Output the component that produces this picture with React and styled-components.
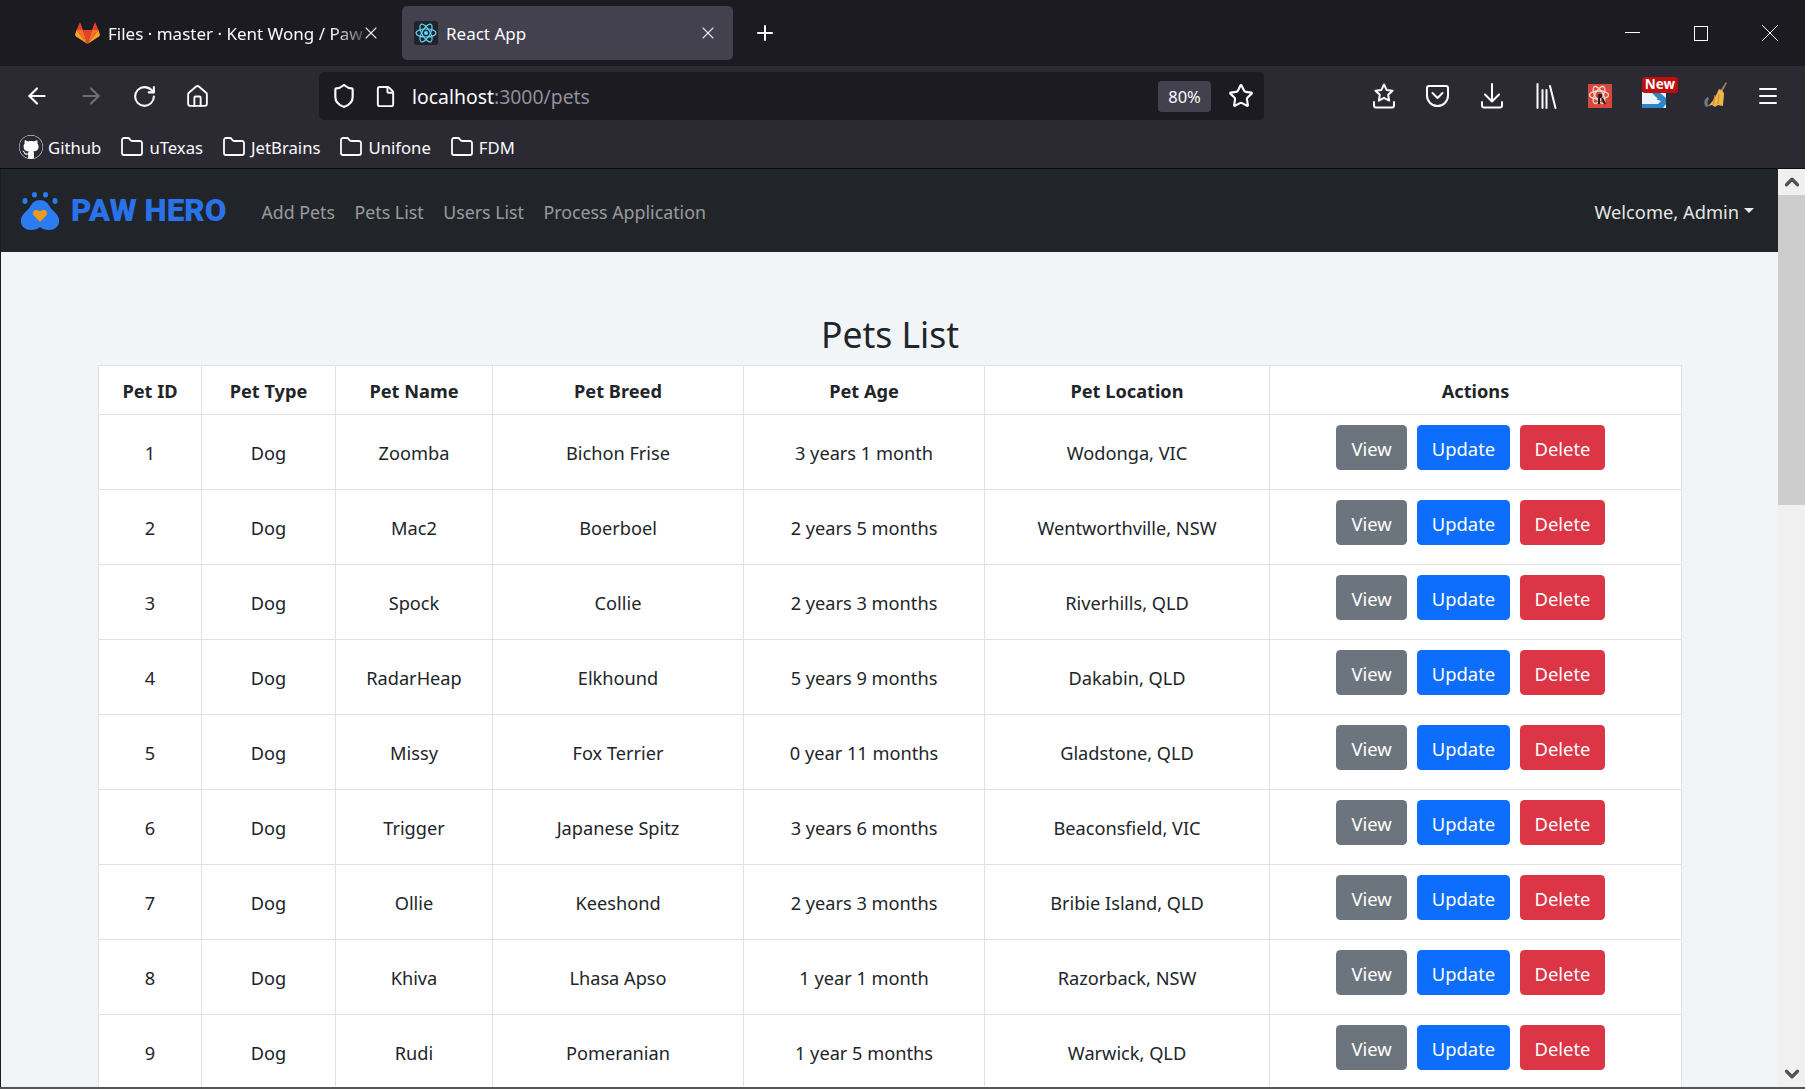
import React from 'react';
import styled, { createGlobalStyle } from 'styled-components';
import { ArrowLeft, ArrowRight, RotateCw, Home, Shield, File, Star, Menu, X, Plus, Folder, ChevronUp, ChevronDown } from 'lucide-react';
import { FaGithub } from 'react-icons/fa';

const Global = createGlobalStyle`
  html, body { margin: 0; padding: 0; height: 100%; overflow: hidden; background: #1c1b22; }
  #root { height: 100%; }
  * { box-sizing: border-box; }
`;

const Window = styled.div`
  width: 1805px; height: 1089px; display: flex; flex-direction: column; overflow: hidden;
  font-family: "Noto Sans", "Open Sans", sans-serif; border-bottom: 2px solid #555;
`;
const TabStrip = styled.div`
  height: 66px; flex: none; background: #1c1b22; display: flex; align-items: center; padding-left: 68px; color: #fbfbfe;
`;
const Tab = styled.div`
  height: 54px; display: flex; align-items: center; position: relative; border-radius: 5px;
  width: ${p => p.$w}px; padding-left: ${p => p.$pad}px; background: ${p => p.$active ? '#42414d' : 'transparent'};
`;
const TabTitle = styled.span`
  font-size: 17px; white-space: nowrap; margin-left: ${p => p.$ml}px;
  ${p => p.$fade && `-webkit-mask-image: linear-gradient(90deg, #000 88%, rgba(0,0,0,.25));`}
`;
const TabClose = styled.span`
  position: absolute; right: ${p => p.$right}px; top: 17px; display: flex; color: #e8e8ec;
`;
const NewTab = styled.span`display: flex; margin-left: 20px;`;
const WindowControls = styled.div`
  margin-left: auto; display: flex; align-items: center; gap: 54px; padding-right: 27px;
`;
const Toolbar = styled.div`
  height: 60px; flex: none; background: #2b2a33; display: flex; align-items: center; padding-left: 24px; color: #fbfbfe;
`;
const NavIcons = styled.div`display: flex; align-items: center; gap: 28px; width: 295px;`;
const UrlBar = styled.div`
  width: 945px; height: 48px; background: #1c1b22; border-radius: 5px; display: flex; align-items: center; padding: 0 10px 0 12px;
`;
const UrlText = styled.span`font-size: 19.4px; margin-left: 15px; color: #fbfbfe; flex: 1;`;
const UrlMuted = styled.span`color: #8f8f9d;`;
const ZoomPill = styled.span`
  width: 53px; height: 31px; background: #42414d; border-radius: 4px; font-size: 16.5px; display: flex; align-items: center; justify-content: center; margin-right: 17px;
`;
const Extensions = styled.div`
  display: flex; align-items: center; margin-left: 108px; height: 40px;
`;
const ExtSlot = styled.span`
  display: flex; position: relative; margin-right: ${p => p.$mr}px;
`;
const BadgedSlot = styled(ExtSlot)`
  align-self: flex-end; margin-bottom: 8px;
`;
const NewBadge = styled.span`
  position: absolute; left: 0; top: -15px; width: 36px; height: 16px; background: #c00d0d; border-radius: 3px; color: #fff;
  font-size: 13.5px; font-weight: 700; line-height: 15px; text-align: center;
`;
const Bookmarks = styled.div`
  height: 43px; flex: none; background: #2b2a33; display: flex; align-items: center; padding-left: 19px; color: #fbfbfe; border-bottom: 1px solid #0c0c0d;
`;
const Bookmark = styled.div`
  display: flex; align-items: center; gap: 5px; font-size: 16.7px; margin-right: 19px;
`;
const GithubBadge = styled.span`
  width: 24px; height: 24px; border-radius: 50%; background: #fbfbfe; display: flex; align-items: center; justify-content: center; color: #2b2a33; overflow: hidden;
`;
const Viewport = styled.div`flex: 1; display: flex; min-height: 0; border-left: 1px solid #1c1b22;`;
const Page = styled.div`flex: 1; min-width: 0; background: #f1f5f8; overflow: hidden;`;
const Navbar = styled.nav`
  height: 83px; background: #212529; display: flex; align-items: center; padding: 2px 24px 0 19px;
`;
const Brand = styled.div`display: flex; align-items: center; gap: 11px; margin-right: 35px; margin-top: -2px;`;
const BrandText = styled.span`
  font-family: Roboto, "Open Sans", sans-serif; font-weight: 900; font-size: 31.4px; color: #2a72ea; white-space: nowrap;
`;
const NavLink = styled.a`
  font-size: 17.8px; color: rgba(255,255,255,.55); margin-right: 19.5px;
`;
const UserMenu = styled.div`
  margin-left: auto; font-size: 18.3px; color: rgba(255,255,255,.9); display: flex; align-items: center;
`;
const Caret = styled.span`
  margin-left: 5px; width: 0; height: 0; border-left: 5.5px solid transparent; border-right: 5.5px solid transparent; border-top: 5.5px solid rgba(255,255,255,.9); margin-top: -2px;
`;
const Container = styled.main`padding: 51px 96px 0 97px;`;
const Title = styled.h2`
  font-weight: 400; font-size: 35.5px; line-height: 62px; margin: 0; text-align: center; color: #212529;
`;
const Table = styled.table`
  width: 1583px; border-collapse: collapse; table-layout: fixed; background: #fff; color: #212529; font-size: 18.2px; text-align: center;
`;
const Th = styled.th`
  border: 1px solid #dee2e6; height: 49px; font-weight: 700; padding: 2px 0 0; width: ${p => p.$w}px;
`;
const Td = styled.td`
  border: 1px solid #dee2e6; height: 75px; padding: 1px 0 0; vertical-align: middle;
`;
const ActionTd = styled(Td)`
  padding: 10px 0 0; vertical-align: top; white-space: nowrap;
`;
const Btn = styled.button`
  height: 45px; border: 1px solid transparent; border-radius: 4.6px; padding: 2px 0 0; color: #fff; font: inherit; font-size: 18.4px; margin-right: 10px;
  width: ${p => p.$w}px; background: ${p => p.$bg};
`;
const Scrollbar = styled.div`
  width: 27px; flex: none; background: #f0f0f0; display: flex; flex-direction: column; align-items: center; color: #505050;
`;
const ScrollBtn = styled.div`height: 26px; flex: none; display: flex; align-items: center; justify-content: center;`;
const Thumb = styled.div`width: 100%; height: 310px; background: #cdcdcd; flex: none;`;
const Spacer = styled.div`flex: 1;`;

const GitlabIcon = () => (
  <svg width="25" height="22" viewBox="0 0 25 22">
    <polygon points="12.5,22 17,8 8,8" fill="#e24329" />
    <polygon points="12.5,22 8,8 1.500,8" fill="#fc6d26" />
    <polygon points="1.500,8 0,13 1,14.500 12.500,22" fill="#fca326" />
    <polygon points="1.500,8 8,8 5,0" fill="#e24329" />
    <polygon points="12.500,22 17,8 23.500,8" fill="#fc6d26" />
    <polygon points="23.500,8 25,13 24,14.500 12.500,22" fill="#fca326" />
    <polygon points="23.500,8 17,8 20,0" fill="#e24329" />
  </svg>
);
const ReactIcon = () => (
  <svg width="24" height="24" viewBox="0 0 24 24">
    <rect width="24" height="24" rx="3" fill="#20232a" />
    <g fill="none" stroke="#61dafb" strokeWidth="1.2">
      <ellipse cx="12" cy="12" rx="10" ry="4" />
      <ellipse cx="12" cy="12" rx="10" ry="4" transform="rotate(60 12 12)" />
      <ellipse cx="12" cy="12" rx="10" ry="4" transform="rotate(120 12 12)" />
    </g>
    <circle cx="12" cy="12" r="2" fill="#61dafb" />
  </svg>
);
const MinimizeIcon = () => (
  <svg width="15" height="16" viewBox="0 0 15 16"><path d="M0 7.500h15" stroke="#fbfbfe" strokeWidth="1" /></svg>
);
const MaximizeIcon = () => (
  <svg width="14" height="15" viewBox="0 0 14 15" fill="none"><rect x=".5" y=".5" width="13" height="14" stroke="#fbfbfe" strokeWidth="1" /></svg>
);
const CloseIcon = () => (
  <svg width="16" height="16" viewBox="0 0 16 16"><path d="M0 0l16 16M16 0L0 16" stroke="#fbfbfe" strokeWidth="1" /></svg>
);
const StarTray = () => (
  <svg width="24" height="26" viewBox="0 0 24 26" fill="none" stroke="#fbfbfe" strokeWidth="2" strokeLinejoin="round" strokeLinecap="round">
    <path d="M12 1.500l2.600 5.400 5.900.8-4.300 4.100 1 5.800-5.200-2.800-5.200 2.800 1-5.800-4.300-4.100 5.900-.8z" />
    <path d="M2 19v3.500a2 2 0 0 0 2 2h16a2 2 0 0 0 2-2V19" />
  </svg>
);
const PocketIcon = () => (
  <svg width="23" height="24" viewBox="0 0 23 24" fill="none" stroke="#fbfbfe" strokeWidth="2" strokeLinejoin="round" strokeLinecap="round">
    <path d="M3 2h17a2 2 0 0 1 2 2v7.500a10.500 10.500 0 0 1-21 0V4a2 2 0 0 1 2-2z" />
    <path d="M6.500 9l5 5 5-5" />
  </svg>
);
const DownloadTray = () => (
  <svg width="24" height="26" viewBox="0 0 24 26" fill="none" stroke="#fbfbfe" strokeWidth="2" strokeLinejoin="round" strokeLinecap="round">
    <path d="M12 1v17M5 11.500l7 7 7-7" />
    <path d="M2 19v3.500a2 2 0 0 0 2 2h16a2 2 0 0 0 2-2V19" />
  </svg>
);
const LibraryIcon = () => (
  <svg width="21" height="26" viewBox="0 0 21 26" fill="none" stroke="#fbfbfe" strokeWidth="2" strokeLinecap="round">
    <path d="M1.500 1v24M6.500 7v18M10.500 7v18M14 3l5.500 22" />
  </svg>
);
const AtomExt = () => (
  <svg width="24" height="24" viewBox="0 0 24 24">
    <rect width="24" height="24" fill="#d6483c" />
    <g fill="none" stroke="#f5d5cf" strokeWidth="1.300">
      <ellipse cx="11" cy="11" rx="9.500" ry="4" />
      <ellipse cx="11" cy="11" rx="9.500" ry="4" transform="rotate(60 11 11)" />
      <ellipse cx="11" cy="11" rx="9.500" ry="4" transform="rotate(120 11 11)" />
    </g>
    <circle cx="12" cy="12" r="2.300" fill="#1f1f1f" />
    <path d="M11 14v6M14 14l3 6" stroke="#1f1f1f" strokeWidth="2" />
  </svg>
);
const SExt = () => (
  <svg width="24" height="16" viewBox="0 0 24 16">
    <rect width="24" height="16" fill="#eaf3f9" />
    <path d="M0 8h14c2 0 2-2 0-3L9 0h8l7 6v6l-3 4H0z" fill="#2f86c4" />
    <path d="M0 12h16l3-3-3-1H0z" fill="#eaf3f9" />
  </svg>
);
const BroomIcon = () => (
  <svg width="25" height="28" viewBox="0 0 25 28">
    <path d="M23 0l1 1-5 9-2-1z" fill="#a08550" />
    <path d="M16 7c3 1 5 3 5 5 0 4-1 8-1 12l-5-1-3 2-3-2-4 1c4-3 8-10 11-17z" fill="#eeb648" />
    <path d="M12 13l-2 10M16 12l-1 10" stroke="#c98f2a" strokeWidth="1" />
    <path d="M5 15c-4 2-5 6-2 10l3-1c-2-2-2-5 0-7z" fill="#6f7780" />
  </svg>
);
const PawLogo = () => (
  <svg width="40" height="38" viewBox="0 0 40 38">
    <ellipse cx="5" cy="9" rx="2.500" ry="3" fill="#2a7cf0" />
    <ellipse cx="14.500" cy="2.800" rx="2.500" ry="2.800" fill="#2a7cf0" />
    <ellipse cx="25.500" cy="2.800" rx="2.500" ry="2.800" fill="#2a7cf0" />
    <ellipse cx="35" cy="9" rx="2.500" ry="3" fill="#2a7cf0" />
    <path d="M20 8c5 0 8 3 10 7 2 3 8 7 9 12 1 6-3 11-10 11-4 0-7-1-9-3-2 2-5 3-9 3-7 0-11-5-10-11 1-5 7-9 9-12 2-4 5-7 10-7z" fill="#2a7cf0" />
    <path d="M20 30l-6.500-7c-2.500-3.500 2.500-7 6.500-3.500 4-3.500 9-0 6.500 3.500z" fill="#f49a1a" />
  </svg>
);

const rows = [
  [1, 'Dog', 'Zoomba', 'Bichon Frise', '3 years 1 month', 'Wodonga, VIC'],
  [2, 'Dog', 'Mac2', 'Boerboel', '2 years 5 months', 'Wentworthville, NSW'],
  [3, 'Dog', 'Spock', 'Collie', '2 years 3 months', 'Riverhills, QLD'],
  [4, 'Dog', 'RadarHeap', 'Elkhound', '5 years 9 months', 'Dakabin, QLD'],
  [5, 'Dog', 'Missy', 'Fox Terrier', '0 year 11 months', 'Gladstone, QLD'],
  [6, 'Dog', 'Trigger', 'Japanese Spitz', '3 years 6 months', 'Beaconsfield, VIC'],
  [7, 'Dog', 'Ollie', 'Keeshond', '2 years 3 months', 'Bribie Island, QLD'],
  [8, 'Dog', 'Khiva', 'Lhasa Apso', '1 year 1 month', 'Razorback, NSW'],
  [9, 'Dog', 'Rudi', 'Pomeranian', '1 year 5 months', 'Warwick, QLD'],
];
const columns = [['Pet ID', 103], ['Pet Type', 134], ['Pet Name', 157], ['Pet Breed', 251], ['Pet Age', 241], ['Pet Location', 285], ['Actions', 412]];

export default function App() {
  return (
    <Window>
      <Global />
      <TabStrip>
        <Tab $w={334} $pad={7}>
          <GitlabIcon />
          <TabTitle $ml={8} $fade>Files · master · Kent Wong / Paw</TabTitle>
          <TabClose $right={21}><X size={20} strokeWidth={1.3} /></TabClose>
        </Tab>
        <Tab $w={331} $pad={12} $active>
          <ReactIcon />
          <TabTitle $ml={8}>React App</TabTitle>
          <TabClose $right={15}><X size={20} strokeWidth={1.3} /></TabClose>
        </Tab>
        <NewTab><Plus size={24} strokeWidth={2} /></NewTab>
        <WindowControls>
          <MinimizeIcon />
          <MaximizeIcon />
          <CloseIcon />
        </WindowControls>
      </TabStrip>
      <Toolbar>
        <NavIcons>
          <ArrowLeft size={26} strokeWidth={2} />
          <ArrowRight size={26} strokeWidth={2} color="#6f6e76" />
          <RotateCw size={25} strokeWidth={2} />
          <Home size={25} strokeWidth={1.8} />
        </NavIcons>
        <UrlBar>
          <Shield size={26} strokeWidth={2} />
          <File size={23} strokeWidth={2} style={{ marginLeft: 17 }} />
          <UrlText>localhost<UrlMuted>:3000/pets</UrlMuted></UrlText>
          <ZoomPill>80%</ZoomPill>
          <Star size={26} strokeWidth={2} />
        </UrlBar>
        <Extensions>
          <ExtSlot $mr={30}><StarTray /></ExtSlot>
          <ExtSlot $mr={31}><PocketIcon /></ExtSlot>
          <ExtSlot $mr={32}><DownloadTray /></ExtSlot>
          <ExtSlot $mr={31}><LibraryIcon /></ExtSlot>
          <ExtSlot $mr={30}><AtomExt /></ExtSlot>
          <BadgedSlot $mr={37}><SExt /><NewBadge>New</NewBadge></BadgedSlot>
          <ExtSlot $mr={28}><BroomIcon /></ExtSlot>
          <Menu size={24} strokeWidth={2} color="#fbfbfe" />
        </Extensions>
      </Toolbar>
      <Bookmarks>
        <Bookmark>
          <GithubBadge><FaGithub size={24} /></GithubBadge>Github
        </Bookmark>
        {['uTexas', 'JetBrains', 'Unifone', 'FDM'].map(n => (
          <Bookmark key={n}><Folder size={24} strokeWidth={1.8} />{n}</Bookmark>
        ))}
      </Bookmarks>
      <Viewport>
        <Page>
          <Navbar>
            <Brand><PawLogo /><BrandText>PAW HERO</BrandText></Brand>
            <NavLink>Add Pets</NavLink>
            <NavLink>Pets List</NavLink>
            <NavLink>Users List</NavLink>
            <NavLink>Process Application</NavLink>
            <UserMenu>Welcome, Admin<Caret /></UserMenu>
          </Navbar>
          <Container>
            <Title>Pets List</Title>
            <Table>
              <thead>
                <tr>{columns.map(([c, w]) => <Th key={c} $w={w}>{c}</Th>)}</tr>
              </thead>
              <tbody>
                {rows.map(r => (
                  <tr key={r[0]}>
                    {r.map((c, i) => <Td key={i}>{c}</Td>)}
                    <ActionTd>
                      <Btn $w={71} $bg="#6c757d">View</Btn>
                      <Btn $w={93} $bg="#0d6efd">Update</Btn>
                      <Btn $w={85} $bg="#dc3545">Delete</Btn>
                    </ActionTd>
                  </tr>
                ))}
              </tbody>
            </Table>
          </Container>
        </Page>
        <Scrollbar>
          <ScrollBtn><ChevronUp size={22} strokeWidth={3.5} /></ScrollBtn>
          <Thumb />
          <Spacer />
          <ScrollBtn><ChevronDown size={22} strokeWidth={3.5} /></ScrollBtn>
        </Scrollbar>
      </Viewport>
    </Window>
  );
}
